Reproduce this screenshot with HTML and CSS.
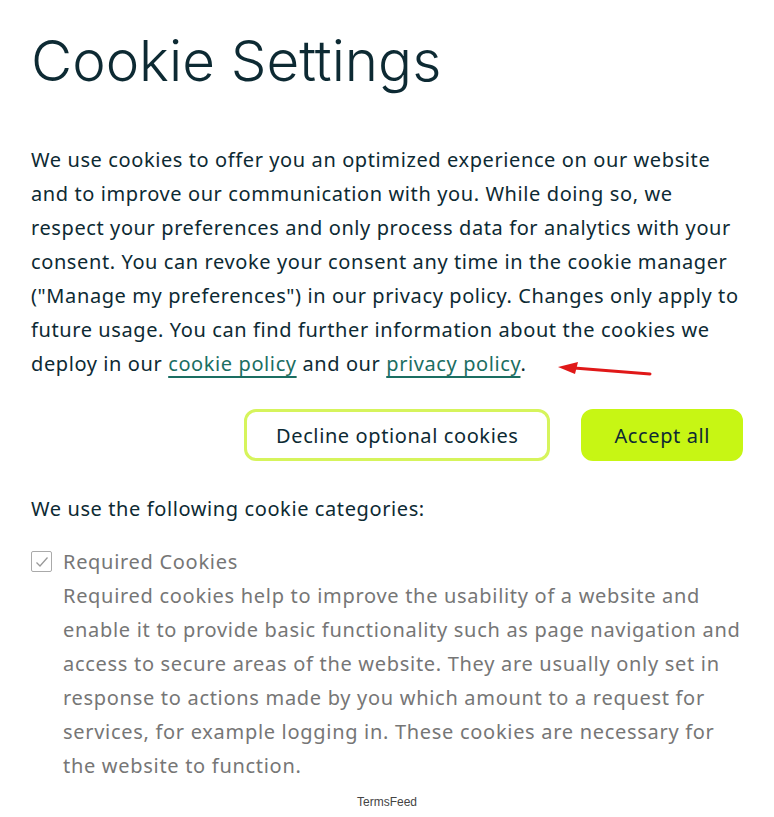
FILE: index.html
```html
<!DOCTYPE html>
<html lang="en">
<head>
<meta charset="utf-8">
<title>Cookie Settings</title>
<link rel="stylesheet" href="styles.css">
</head>
<body>
<main class="panel">
  <h1 class="title">Cookie Settings</h1>
  <p class="intro">We use cookies to offer you an optimized experience on our website and to improve our communication with you. While doing so, we respect your preferences and only process data for analytics with your consent. You can revoke your consent any time in the cookie manager ("Manage my preferences") in our privacy policy. Changes only apply to future usage. You can find further information about the cookies we deploy in our <a href="#" class="link">cookie policy</a> and our <a href="#" class="link">privacy policy</a>.<span class="arrow-anchor"><svg class="arrow" width="100" height="20" viewBox="0 0 100 20"><path d="M96 13 L20 7" stroke="#e01818" stroke-width="3" stroke-linecap="round" fill="none"/><path d="M4 6 L24 1 L21 13 Z" fill="#e01818"/></svg></span></p>
  <div class="actions">
    <button class="btn btn-outline">Decline optional cookies</button>
    <button class="btn btn-fill">Accept all</button>
  </div>
  <p class="cats">We use the following cookie categories:</p>
  <div class="category">
    <span class="check"><svg width="14" height="12" viewBox="0 0 14 12"><path d="M1.5 6.5 L5 10 L12.5 1.5" stroke="#999" stroke-width="1.3" fill="none"/></svg></span>
    <div class="cat-body">
      <div class="cat-name">Required Cookies</div>
      <p class="cat-desc">Required cookies help to improve the usability of a website and enable it to provide basic functionality such as page navigation and access to secure areas of the website. They are usually only set in response to actions made by you which amount to a request for services, for example logging in. These cookies are necessary for the website to function.</p>
    </div>
  </div>
  <footer class="brand">TermsFeed</footer>
</main>
</body>
</html>
```
FILE: styles.css
```css
html, body { margin: 0; background: #fff; }
body { font-family: "Noto Sans", "Open Sans", sans-serif; color: #0d2a33; }
.panel { padding: 21px 31px 0 31px; width: 712px; }
.title {
  font-family: Inter, "Noto Sans", sans-serif;
  font-weight: 300;
  font-size: 56.5px;
  line-height: 80px;
  margin: 0 0 42px 0;
  color: #0d2a33;
}
.intro, .cats, .btn { letter-spacing: 0.6px; }
.cat-body { letter-spacing: 0.7px; }
.intro {
  font-size: 20px;
  line-height: 34px;
  margin: 0;
}
.link { color: #1b6e62; text-decoration: underline; text-decoration-thickness: 2px; text-underline-offset: 5px; }
.arrow-anchor { position: relative; }
.arrow { position: absolute; left: 28px; top: 11px; }
.actions { display: flex; justify-content: flex-end; gap: 31px; margin-top: 28px; }
.btn {
  font-family: inherit; font-size: 20px; color: #0d2a33;
  height: 52px; border-radius: 12px; padding: 0 29px; cursor: pointer;
}
.btn-outline { background: #fff; border: 3px solid #d6f45c; }
.btn-fill { background: #c7f614; border: 3px solid #c7f614; padding: 0 30px; }
.cats { font-size: 20px; line-height: 34px; margin: 31px 0 19px 0; }
.category { display: flex; gap: 11px; align-items: flex-start; }
.check {
  width: 19px; height: 19px; border: 1px solid #aaa; border-radius: 2px;
  display: flex; align-items: center; justify-content: center; margin-top: 6px; flex: none;
}
.cat-body { color: #767676; font-size: 20px; line-height: 34px; }
.cat-name { line-height: 34px; }
.cat-desc { margin: 0; }
.brand { text-align: center; font-family: "Liberation Sans", Arial, sans-serif; font-size: 12px; color: #444; margin-top: 12px; }
```
